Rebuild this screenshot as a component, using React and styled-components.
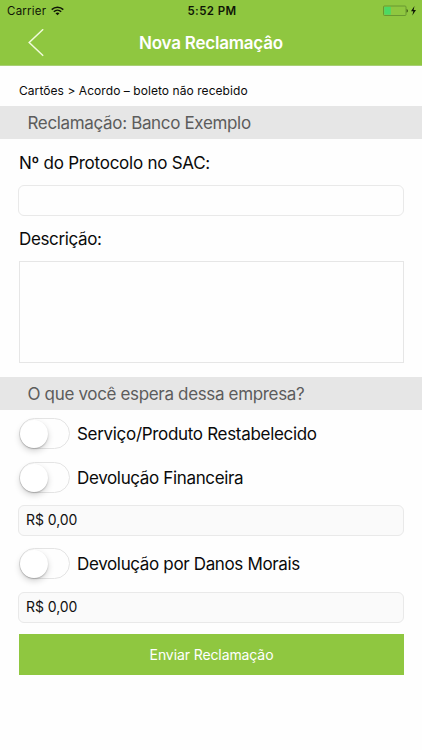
import React, { useState } from 'react'
import styled, { createGlobalStyle } from 'styled-components'

const GlobalStyle = createGlobalStyle`
  * {
    box-sizing: border-box;
  }
  body {
    margin: 0;
    background: #fefefe;
    color: #0a0a0a;
    font-family: Inter, "Liberation Sans", sans-serif;
  }
`

const Screen = styled.div`
  display: flex;
  flex-direction: column;
  height: 750px;
  overflow: hidden;
`

const Header = styled.header`
  height: 66px;
  background: #8fc740;
  border-bottom: 1px solid #a9cf75;
`

const StatusBar = styled.div`
  display: grid;
  grid-template-columns: 1fr auto 1fr;
  align-items: center;
  height: 22px;
  padding: 0 5px 0 7px;
  color: #0f1606;
`

const Carrier = styled.div`
  display: flex;
  align-items: center;
  gap: 5px;
  font-size: 11.5px;
  letter-spacing: 0.24px;
`

const Clock = styled.div`
  font-size: 11.5px;
  font-weight: 600;
  letter-spacing: 0.4px;
`

const Battery = styled.div`
  display: flex;
  justify-content: flex-end;
`

const NavBar = styled.div`
  display: grid;
  grid-template-columns: 72px 1fr 72px;
  align-items: center;
  height: 42px;
`

const BackButton = styled.button`
  display: flex;
  padding: 0 0 0 28px;
  border: 0;
  background: none;
`

const Title = styled.h1`
  margin: 0;
  color: #fff;
  font-size: 17px;
  font-weight: 600;
  letter-spacing: -0.22px;
  text-align: center;
  white-space: nowrap;
`

const Breadcrumb = styled.div`
  height: 40px;
  padding: 9px 19px 0;
  font-size: 12px;
  line-height: 32px;
  letter-spacing: 0.06px;
`

const Band = styled.h2`
  height: 33px;
  margin: 0;
  padding-left: 27.5px;
  background: #e6e6e6;
  color: #5c5c5c;
  font-size: 17px;
  font-weight: 400;
  line-height: ${props => props.$line}px;
  letter-spacing: -0.34px;
`

const Form = styled.form`
  display: flex;
  flex-direction: column;
  padding: 0 18px;
`

const Label = styled.label`
  height: ${props => props.$height}px;
  padding-left: 1px;
  font-size: 17px;
  line-height: ${props => props.$height + 2}px;
  letter-spacing: ${props => props.$spacing};
`

const Input = styled.input`
  width: 100%;
  height: 31px;
  padding: 0 7px 2px;
  border: 1px solid #e9e9e9;
  border-radius: 6px;
  background: ${props => (props.$filled ? '#fafafa' : '#fefefe')};
  color: #111;
  font-family: inherit;
  font-size: 14px;
  letter-spacing: -0.06px;
  outline: none;
`

const TextArea = styled.textarea`
  display: block;
  height: 102px;
  margin: 0 0 14px 1px;
  border: 1px solid #e6e6e6;
  background: #fefefe;
  resize: none;
  outline: none;
`

const Option = styled.div`
  display: flex;
  align-items: center;
  gap: 7px;
  height: 31px;
  margin: ${props => props.$margin};
  font-size: 17px;
  letter-spacing: ${props => props.$spacing || '-0.35px'};
`

const Track = styled.button`
  display: flex;
  align-items: center;
  justify-content: ${props => (props.$on ? 'flex-end' : 'flex-start')};
  width: 51px;
  height: 31px;
  padding: 0;
  border: 1.5px solid ${props => (props.$on ? '#8fc740' : '#e4e4e4')};
  border-radius: 16px;
  background: ${props => (props.$on ? '#8fc740' : '#fefefe')};
`

const Thumb = styled.span`
  width: 28px;
  height: 28px;
  border-radius: 50%;
  background: #fff;
  box-shadow: 0 3px 6px rgba(0, 0, 0, 0.17), 0 1px 1.5px rgba(0, 0, 0, 0.2);
`

const Submit = styled.button`
  height: 41px;
  margin: 11px 0 0 1px;
  border: 0;
  background: #8fc740;
  color: #fff;
  font-family: inherit;
  font-size: 14px;
  letter-spacing: -0.1px;
`

const WifiIcon = () => (
  <svg width="13" height="10" viewBox="0 0 13 10" fill="none" stroke="currentColor" strokeWidth="1.5">
    <path d="M0.7 3.6C4 0.4 9 0.4 12.3 3.6" />
    <path d="M2.8 5.7C4.9 3.7 8.1 3.7 10.2 5.7" />
    <path d="M6.5 9.2L4.5 7.2C5.6 6.1 7.4 6.1 8.5 7.2Z" fill="currentColor" stroke="none" />
  </svg>
)

const BatteryIcon = () => (
  <svg width="34" height="12" viewBox="0 0 34 12">
    <rect x="0.5" y="1" width="22.5" height="9.5" rx="1" fill="none" stroke="#649330" strokeWidth="0.9" />
    <rect x="1.3" y="1.8" width="6.5" height="7.9" fill="#4cd964" />
    <path d="M23.7 4C25.2 4.4 25.2 7.2 23.7 7.6Z" fill="#31480f" />
    <path d="M31.5 1L28 6.3H30.3L29.3 10.6L33 5.1H30.6Z" fill="#0f1606" />
  </svg>
)

const BackIcon = () => (
  <svg width="16" height="28" viewBox="0 0 16 28" fill="none" stroke="#f1fbdc" strokeWidth="1.5">
    <path d="M15.2 0.3L1.2 13.5L15.2 26.7" />
  </svg>
)

const Toggle = ({ label, margin, spacing }) => {
  const [on, setOn] = useState(false)
  return (
    <Option $margin={margin} $spacing={spacing}>
      <Track type="button" role="switch" aria-checked={on} aria-label={label} $on={on} onClick={() => setOn(!on)}>
        <Thumb />
      </Track>
      {label}
    </Option>
  )
}

const App = () => (
  <>
    <GlobalStyle />
    <Screen>
      <Header>
        <StatusBar>
          <Carrier>Carrier <WifiIcon /></Carrier>
          <Clock>5:52 PM</Clock>
          <Battery><BatteryIcon /></Battery>
        </StatusBar>
        <NavBar>
          <BackButton aria-label="Voltar"><BackIcon /></BackButton>
          <Title>Nova Reclamaçâo</Title>
        </NavBar>
      </Header>
      <Breadcrumb>Cartões &gt; Acordo – boleto não recebido</Breadcrumb>
      <Band $line={35}>Reclamação: Banco Exemplo</Band>
      <Form as="section">
        <Label htmlFor="protocolo" $height={46} $spacing="-0.25px">Nº do Protocolo no SAC:</Label>
        <Input id="protocolo" />
        <Label htmlFor="descricao" $height={45} $spacing="-0.36px">Descrição:</Label>
        <TextArea id="descricao" />
      </Form>
      <Band $line={34}>O que você espera dessa empresa?</Band>
      <Form onSubmit={e => e.preventDefault()}>
        <Toggle label="Serviço/Produto Restabelecido" margin="8px 0 0 1px" spacing="-0.31px" />
        <Toggle label="Devolução Financeira" margin="13px 0 12px 1px" />
        <Input $filled aria-label="Valor" defaultValue="R$ 0,00" />
        <Toggle label="Devolução por Danos Morais" margin="12px 0 13px 1px" />
        <Input $filled aria-label="Valor" defaultValue="R$ 0,00" />
        <Submit>Enviar Reclamação</Submit>
      </Form>
    </Screen>
  </>
)

export default App
